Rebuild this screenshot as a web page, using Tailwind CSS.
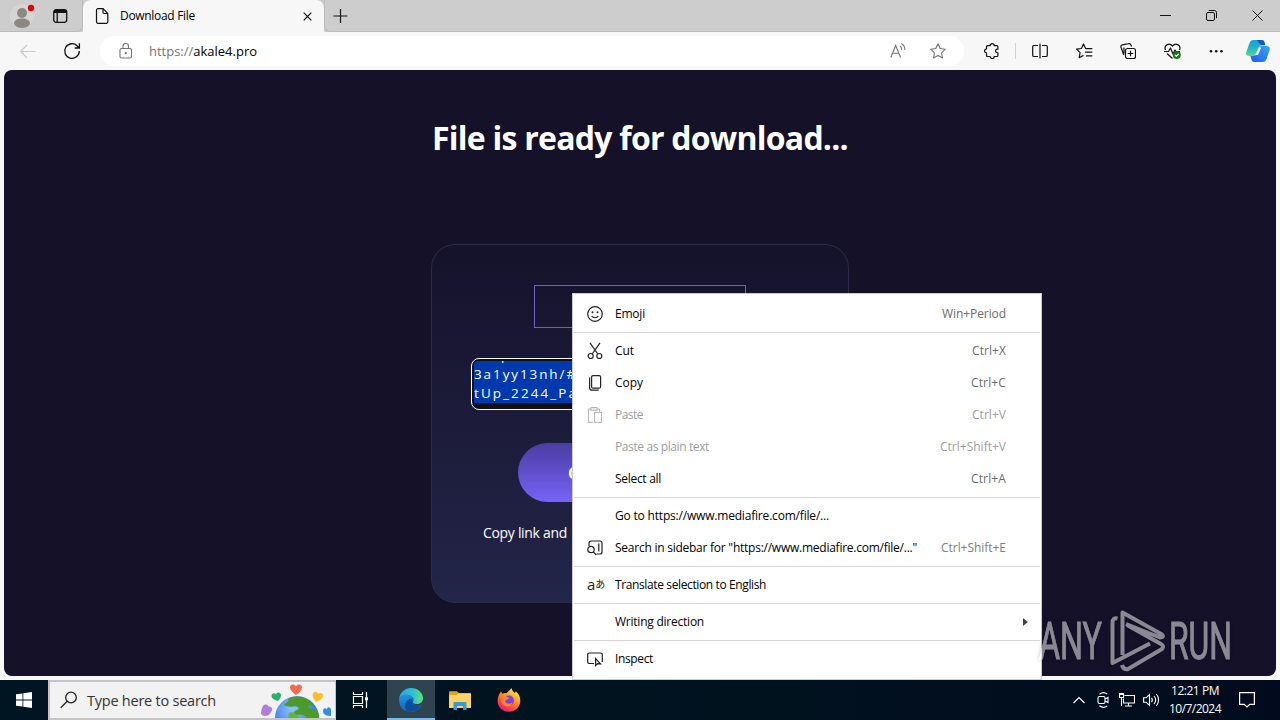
<!DOCTYPE html>
<html lang="en">
<head>
<meta charset="utf-8">
<title>Download File</title>
<script src="https://cdn.jsdelivr.net/npm/@tailwindcss/browser@4"></script>
</head>
<body class="w-[1280px] h-[720px] overflow-hidden relative flex flex-col bg-[#f7f7f8] text-black font-['Open_Sans','Noto_Sans',sans-serif] text-xs whitespace-nowrap">

<!-- Tab strip -->
<header class="h-8 shrink-0 flex bg-[#cdcdcd]">
  <div class="w-[83px] flex items-center border-b border-r border-[#bbb] rounded-br-md">
    <svg class="ml-2.5 w-7 h-7" viewBox="0 0 28 28"><circle cx="12" cy="14" r="12" fill="#d6d5d4"/><circle cx="12" cy="11" r="5" fill="#8b8886"/><path d="M4 22c0-4 3.500-5.500 8-5.500s8 1.500 8 5.500c-2 3-5 4-8 4s-6-1-8-4z" fill="#8b8886"/><circle cx="21" cy="6" r="3.200" fill="#e3000f"/></svg>
    <svg class="ml-3.5 w-4 h-4" viewBox="0 0 16 16" fill="none" stroke="#111" stroke-width="1.300"><rect x="1.700" y="1.700" width="13" height="12.600" rx="2.500"/><path d="M2 3.500h12.500" stroke-width="3"/><path d="M5.200 4v10"/></svg>
  </div>
  <div class="w-[241px] flex items-center bg-[#f7f7f7] rounded-t-lg">
    <svg class="ml-3 w-3.5 h-4" viewBox="0 0 14 16" fill="none" stroke="#111" stroke-width="1.200"><path d="M3 .700h5L12.800 5.500v8.300a1.500 1.500 0 0 1-1.500 1.500H3a1.500 1.500 0 0 1-1.500-1.500V2.200A1.500 1.500 0 0 1 3 .700z"/><path d="M8 .700v3.600a1.200 1.200 0 0 0 1.200 1.200h3.600"/></svg>
    <span class="ml-[11px]" data-w="75">Download File</span>
    <svg class="ml-auto mr-3 w-[9px] h-[9px]" viewBox="0 0 9 9" stroke="#111" stroke-width="1.200"><path d="M.700.700l7.600 7.600M8.300.700L.700 8.300"/></svg>
  </div>
  <div class="flex-1 flex items-center border-b border-l border-[#bbb] rounded-bl-md">
    <svg class="ml-[7px] w-4 h-4" viewBox="0 0 16 16" stroke="#111" stroke-width="1.200"><path d="M8.500 1v14M1.500 8h14"/></svg>
    <div class="ml-auto mr-[17px] flex items-center gap-[35px]">
      <svg class="w-[11px] h-[11px]" viewBox="0 0 11 11" stroke="#111"><path d="M0 5.500h11"/></svg>
      <svg class="w-[11px] h-[11px]" viewBox="0 0 11 11" fill="none" stroke="#111"><rect x=".500" y="2.500" width="8" height="8" rx="1.500"/><path d="M2.800.500H8.500a2 2 0 0 1 2 2v5.700"/></svg>
      <svg class="w-[11px] h-[11px]" viewBox="0 0 11 11" stroke="#111"><path d="M.500.500l10 10M10.500.500l-10 10"/></svg>
    </div>
  </div>
</header>

<!-- Toolbar -->
<nav class="h-[38px] shrink-0 flex items-center bg-[#f7f7f7]">
  <svg class="ml-5 w-4 h-4" viewBox="0 0 16 16" fill="none" stroke="#cbcbcb" stroke-width="1.200"><path d="M15.500 8.500H1M7 2L.700 8.500 7 15"/></svg>
  <svg class="ml-[27px] w-[18px] h-[18px]" viewBox="0 0 18 18" fill="none" stroke="#111" stroke-width="1.300"><path d="M16.300 9a7.300 7.300 0 1 1-2-5l2 2M16.400 1.300V6h-4.700"/></svg>
  <div class="ml-[19px] w-[864px] h-[30px] rounded-full bg-white flex items-center">
    <svg class="ml-[19px] w-3.5 h-4" viewBox="0 0 14 16" fill="none" stroke="#757575" stroke-width="1.100"><rect x="1" y="5.500" width="11.500" height="9.500" rx="1.500"/><path d="M4 5.500V3.300a2.750 2.750 0 0 1 5.500 0v2.200"/><circle cx="6.750" cy="10.200" r=".6" fill="#757575"/></svg>
    <span class="ml-4 pt-px text-[13px]" data-w="108"><span class="text-[#757575]">https://</span>akale4.pro</span>
    <svg class="ml-auto w-4 h-4" viewBox="0 0 16 16" fill="none" stroke="#757575" stroke-width="1.100"><path d="M.800 14.500L5.700 2.500l4.900 12M2.500 10.300h6.400M9.800 2.900c1.300.8 1.900 2.200 1.900 4M11.300.600c2.500 1.400 3.700 3.700 3.600 6.500"/></svg>
    <svg class="ml-6 mr-[18px] w-4 h-4" viewBox="0 0 16 16" fill="none" stroke="#757575" stroke-width="1.100" stroke-linejoin="round"><path d="M8 .800l2.200 4.700 5.100.7-3.700 3.600.9 5.200L8 12.500 3.500 15l.9-5.200L.700 6.200l5.100-.7z"/></svg>
  </div>
  <svg class="ml-5 w-4 h-4" viewBox="0 0 16 16" fill="none" stroke="#111" stroke-width="1.200" stroke-linejoin="round"><path d="M3.500 2.700h2.700c0-2.700 4-2.700 4 0h2.700a1 1 0 0 1 1 1v2.500c-2.800-.6-3.400 3.700 0 3.600v2.700a1 1 0 0 1-1 1h-2.700c0 2.700-4 2.700-4 0H3.500a1 1 0 0 1-1-1V9.800c-2.600 0-2.600-3.800 0-3.800V3.700a1 1 0 0 1 1-1z"/></svg>
  <div class="ml-[15px] w-px h-4 bg-[#d0d0d0]"></div>
  <svg class="ml-4 w-4 h-4" viewBox="0 0 16 16" fill="none" stroke="#111" stroke-width="1.200"><path d="M6 2.500H2A1.300 1.300 0 0 0 .700 3.800v8.400A1.300 1.300 0 0 0 2 13.500h4M8 .500v15M10 2.500h4a1.300 1.300 0 0 1 1.300 1.300v8.400a1.300 1.300 0 0 1-1.300 1.300h-4"/></svg>
  <svg class="ml-7 w-[17px] h-4" viewBox="0 0 17 16" fill="none" stroke="#111" stroke-width="1.200" stroke-linejoin="round"><path d="M10.500 5.500H9.600L7.500.900 5.400 5.500l-4.800.7 3.500 3.500-.9 5 4.300-2.300M9.800 5.600h6.500M9 9.200h7.300M10 12.800h6.300"/></svg>
  <svg class="ml-[27px] w-4 h-4" viewBox="0 0 16 16" fill="none" stroke="#111" stroke-width="1.200"><rect x="5.500" y="5.500" width="10" height="10" rx="2"/><path d="M10.500 7.700v5.600M7.700 10.500h5.600M3.800 12L1 4.300a2 2 0 0 1 1.300-2.500L8.500.700a2 2 0 0 1 2.400 1.200l.6 1.600M4 4.500v6"/></svg>
  <svg class="ml-7 w-[17px] h-4" viewBox="0 0 17 16" fill="none" stroke="#111" stroke-width="1.200" stroke-linejoin="round"><path d="M1.500 7C-.500 2.500 5-.800 8.500 3 12-.800 17.500 2.500 15.500 7M0 8.500h4.500l2-3.500 2.500 6 2-4 1 1.500h4M3 10.500l5.500 5"/><circle cx="12.800" cy="12" r="4" fill="#107c10" stroke="none"/><path d="M11 12l1.300 1.300 2.400-2.500" stroke="#fff"/></svg>
  <svg class="ml-[27px] w-4 h-4" viewBox="0 0 16 16" fill="#111"><circle cx="3" cy="8.300" r="1.300"/><circle cx="8.200" cy="8.300" r="1.300"/><circle cx="13.400" cy="8.300" r="1.300"/></svg>
  <svg class="ml-[22px] w-6 h-6" viewBox="0 0 24 24">
    <defs>
      <linearGradient id="c1" x1="0" y1="0" x2="0" y2="1"><stop offset="0" stop-color="#149fe0"/><stop offset=".5" stop-color="#22b4c8"/><stop offset="1" stop-color="#5bd884"/></linearGradient>
      <linearGradient id="c2" x1="0" y1="1" x2="1" y2="0"><stop offset="0" stop-color="#1d5be6"/><stop offset="1" stop-color="#36a7fa"/></linearGradient>
    </defs>
    <path d="M7.500 1h8c2 0 2.700 1 3.200 3l.5 2h-2.500c-2 0-3 .8-3.600 2.700L11 14.500C10.400 16.500 9.500 17 7.500 17H3.500C.500 17-.300 15 .500 12.500L3.500 4C4.200 2 5.500 1 7.500 1z" fill="url(#c1)"/>
    <path d="M10.500 1h5c2 0 2.700 1 3.200 3l.5 2.200h-4z" fill="#1556ba"/>
    <path d="M16.500 23h-8c-2 0-2.700-1-3.200-3l-.8-3H7.500c2 0 3-.8 3.600-2.700L13 9.500C13.600 7.500 14.500 7 16.500 7h4c3 0 3.800 2 3 4.500L20.500 20c-.7 2-2 3-4 3z" fill="url(#c2)"/>
    <path d="M12.500 8.500h2.700L12 16H9.300z" fill="#f2fbff"/>
  </svg>
</nav>

<!-- Page -->
<div class="h-[610px] shrink-0 px-1 pb-1">
  <main class="h-[606px] rounded-lg bg-[#141129] overflow-hidden flex flex-col items-center text-white">
    <h1 class="mt-[46px] h-11 leading-[44px] text-[32px] font-bold" data-w="416">File is ready for download...</h1>
    <section class="mt-[84px] w-[418px] h-[359px] rounded-[24px] border border-[#2e2b49] bg-linear-to-b from-[#15122b] to-[#232549] flex flex-col items-center">
      <div class="mt-10 w-[212px] h-[43px] border border-[#6c62c4]"></div>
      <div class="mt-[30px] w-[338px] h-[52px] rounded-lg border border-white bg-[#101018] p-[2px] overflow-hidden">
        <div class="h-[42px] rounded-tl bg-[#0038ad] overflow-hidden flex flex-col justify-end text-[13.5px] leading-[19px]">
          <div data-w="70" class="self-start">https://</div>
          <div data-w="103" class="self-start">3a1yy13nh/#</div>
          <div data-w="104" class="self-start">tUp_2244_Pa</div>
        </div>
      </div>
      <div class="mt-[33px] w-[244px] h-[59px] rounded-full bg-linear-to-b from-[#4b3da3] to-[#7763f8] flex items-center pl-[50px] text-base font-bold">C</div>
      <p class="mt-5 w-[314px] text-[14px] leading-[22px]"><span data-w="84">Copy link and</span></p>
    </section>
  </main>
</div>

<!-- Taskbar -->
<footer class="h-10 shrink-0 flex items-stretch text-white bg-linear-to-r from-[#001522] via-[#00131f] to-[#020b1d]">
  <div class="w-12 flex items-center justify-center">
    <svg class="w-4 h-4" viewBox="0 0 16 16" fill="#fff"><path d="M0 2.300L6.500 1.400V7.500H0zM7.300 1.300L16 0v7.500H7.300zM0 8.400h6.500v6.200L0 13.700zM7.300 8.400H16V16l-8.700-1.300z"/></svg>
  </div>
  <div class="w-72 border-y-2 border-l-2 border-r border-[#c4c4c4] bg-[#f2f2f2] flex items-center text-[#333] text-[14.5px]">
    <svg class="ml-2.5 w-[18px] h-[18px]" viewBox="0 0 18 18" fill="none" stroke="#222" stroke-width="1.300"><circle cx="11" cy="6.500" r="5.300"/><path d="M7.200 10.300L.800 16.700"/></svg>
    <span class="ml-[9px] pt-0.5" data-w="129">Type here to search</span>
    <svg class="ml-auto mr-1 w-[70px] h-9" viewBox="0 0 70 36">
      <defs><radialGradient id="sea" cx=".4" cy=".3"><stop offset="0" stop-color="#8fc4ff"/><stop offset="1" stop-color="#3f7de8"/></radialGradient></defs>
      <circle cx="36" cy="36" r="22" fill="url(#sea)"/>
      <path d="M27 17c8-5 20-2 26 6-2 2-4-1-6 2 3 2 6 2 9 3 2 3 2 6 2 8H46c-3-4-6-4-10-3-5-1-3-4 0-5 3 0 2-3-1-4-4 1-8 1-12-1 1-2 6-3 4-6z" fill="#4b9b26"/>
      <path d="M28 31c4-2 8 1 10 5H27z" fill="#62b536"/>
      <path d="M35 13c-4-3-6-5-6-7.500C29 2 33.500 1.500 35 4.500 36.500 1.500 41 2 41 5.500 41 8 39 10 35 13z" fill="#f26a4f"/>
      <path d="M17 19c-4-1-6.500-3-6.500-5 0-3 3.500-3.500 4.500-1.500.5-3 5-2.500 5 .5 0 2-1 4-3 6z" fill="#25b36b"/>
      <path d="M55 20c-3-4-4-6-3-8.500 1-2.500 4.500-2 5 .5 2-2 5.500-.5 5 2-.5 2.500-3 4.500-7 6z" fill="#fbbd27"/>
      <path d="M8 33c-4 2-8 1-8-2s1-5 2-7c2-2.500 5-1.500 5.500.500 2.500-.5 4.500 2 3.500 4z" fill="#b07fdc"/>
      <path d="M62 29c0-3 3-3.500 4-1.500 0-3 3.500-3 4 0v6.500c-4 0-8-1-8-5z" fill="#2f8fe0"/>
    </svg>
  </div>
  <div class="w-[51px] flex items-center justify-center pr-0.5">
    <svg class="w-[17px] h-4" viewBox="0 0 17 16" fill="none" stroke="#fff" stroke-width="1.200"><path d="M1.500 0v2.500h9V0M1.500 16v-2.500h9V16M1.500 4.500h9v7h-9zM14.500 0v16"/><path d="M13 5.300h3v3h-3z" fill="#fff" stroke="none"/></svg>
  </div>
  <div class="w-12 bg-[#30444f] border-b-2 border-[#76b9ed] flex items-center justify-center">
    <svg class="mt-0.5 w-6 h-6" viewBox="0 0 24 24">
      <defs>
        <linearGradient id="e1" x1="0" x2="1"><stop offset="0" stop-color="#2aa5e8"/><stop offset=".6" stop-color="#2fc3cf"/><stop offset="1" stop-color="#66e06c"/></linearGradient>
        <linearGradient id="e2" x1="0" y1="0" x2="0" y2="1"><stop offset="0" stop-color="#1e93e0"/><stop offset="1" stop-color="#1167c2"/></linearGradient>
      </defs>
      <path d="M0 11C1 4 6 0 12 0c7 0 12 5 12 10 0 4-3 6-6 6-3 0-5-1-4-2.500C16 10 12 7 8 7c-4 0-7 2-8 4z" fill="url(#e1)"/>
      <path d="M0 12c0-3 3-5.500 7-5.500 4 0 7.500 2.500 7 6-.2 1-1 1.200-1 2 0 1.500 2 3 5 3 2 0 3.500-.6 4.500-.8C20.500 21 16.500 24 12 24 5 24 0 19 0 12z" fill="url(#e2)"/>
      <path d="M9 23.500C4 20 6 12 11.500 10.500c1.500.2 2.500 1.500 2 3-1.500 2.500 1.500 4 4 4 2 0 3.500-.6 4.500-.8C19.500 22 14.500 24.500 9 23.500z" fill="#0c4c9c"/>
    </svg>
  </div>
  <div class="w-[49px] flex items-center justify-center">
    <svg class="w-[22px] h-[19px]" viewBox="0 0 22 19"><path d="M0 1.500A1.300 1.300 0 0 1 1.300.200H8l1.700 1.800H22V6H0z" fill="#e9a01c"/><path d="M0 4h8l1.500-1.500H22V17H0z" fill="#fcd462"/><path d="M4.500 19v-7a1 1 0 0 1 1-1h11a1 1 0 0 1 1 1v7h-3.500v-4H8v4z" fill="#3a96dd"/></svg>
  </div>
  <div class="w-[49px] flex items-center justify-center">
    <svg class="w-6 h-6" viewBox="0 0 24 24">
      <defs><linearGradient id="f1" x1=".8" y1="0" x2=".2" y2="1"><stop offset="0" stop-color="#fff14a"/><stop offset=".4" stop-color="#ff9a1f"/><stop offset=".75" stop-color="#ff3d4f"/><stop offset="1" stop-color="#e31587"/></linearGradient></defs>
      <path d="M4 3.500c.5 1 1 1.700 1.500 2.200C7 5 8 5 9.500 5.300 11 3.500 13 2 14.500 0c.5 2.500 2 4 3.500 5l.7-1.700C22 6 23.500 9.500 23.300 13c-.3 6-5 10.800-11.300 10.800S.600 19 .600 13C.600 9 2 6 4 3.500z" fill="url(#f1)"/>
      <circle cx="12" cy="12.500" r="5" fill="#7a3ff0"/>
      <path d="M5.500 9c3-2 5 0 7 1-2 2-4 1.500-4.500 3 .5 3 5 3.500 7.500 1.500-1 4-6 5-9 2.500-2.500-2-3-5-1-8z" fill="#ff8a20"/>
    </svg>
  </div>
  <div class="ml-auto flex items-center">
    <svg class="w-3 h-2" viewBox="0 0 12 8" fill="none" stroke="#fff" stroke-width="1.200"><path d="M.500 7L6 1.500 11.500 7"/></svg>
    <svg class="ml-3 w-[13px] h-4" viewBox="0 0 13 16" fill="none" stroke="#fff" stroke-width="1.100"><rect x="1" y="4.500" width="7" height="7" rx="1.500"/><path d="M8 7l3-1.500v5L8 9M2.500 2.200C5 .200 8 .200 10.300 2.200M2.500 13.800c2.500 2 5.500 2 7.800 0"/></svg>
    <svg class="ml-[9px] w-4 h-3.5" viewBox="0 0 16 14" fill="none" stroke="#fff" stroke-width="1.100"><path d="M5.500 2.500h10v7.500h-11V5.500M9.500 10v3M6 13h7M.500.500h4v4h-4zM2.500 4.500V13M.500 1.500h4"/></svg>
    <svg class="ml-2 w-[17px] h-3.5" viewBox="0 0 17 14" fill="none" stroke="#fff" stroke-width="1.100"><path d="M.600 4.800h2.500l3.400-3.300v11L3.100 9.200H.600zM8.500 4.800c1 1.300 1 3.100 0 4.400M11 3c2 2.400 2 5.600 0 8M13.300 1c3 3.500 3 8.500 0 12"/></svg>
    <div class="ml-2 w-[54px] flex flex-col items-center text-[12px] leading-[18px]"><span data-w="48">12:21 PM</span><span data-w="52">10/7/2024</span></div>
    <svg class="ml-[17px] mr-[25px] w-4 h-4" viewBox="0 0 16 16" fill="none" stroke="#fff" stroke-width="1.200"><path d="M.600.600h14.800v11.800h-4.600L8 15l-2.800-2.600H.600z"/></svg>
  </div>
</footer>

<!-- Context menu -->
<div class="absolute left-[572px] top-[293px] w-[470px] h-[387px] bg-white border border-[#ccc] pt-1 flex flex-col">
  <div class="h-8 flex items-center pl-3.5 pr-[35px]">
    <svg class="w-4 h-4 mr-3" viewBox="0 0 16 16" fill="none" stroke="#222" stroke-width="1.200"><circle cx="8" cy="8" r="7.300"/><path d="M4.700 10c1.500 2.300 5.100 2.300 6.600 0"/><g fill="#222" stroke="none"><circle cx="5.500" cy="6.300" r="1"/><circle cx="10.500" cy="6.300" r="1"/></g></svg>
    <span data-w="30">Emoji</span><span class="ml-auto text-[#6b6b6b]" data-w="64">Win+Period</span>
  </div>
  <hr class="my-0.5 mx-px border-[#d4d4d6]">
  <div class="h-8 flex items-center pl-3.5 pr-[35px]">
    <svg class="w-4 h-[18px] mr-3" viewBox="0 0 16 18" fill="none" stroke="#222" stroke-width="1.200"><circle cx="3.700" cy="14" r="2.500"/><circle cx="12.300" cy="14" r="2.500"/><path d="M3 .800l7.800 11.200M13 .800L5.200 12"/></svg>
    <span data-w="19">Cut</span><span class="ml-auto text-[#6b6b6b]" data-w="34">Ctrl+X</span>
  </div>
  <div class="h-8 flex items-center pl-3.5 pr-[35px]">
    <svg class="w-4 h-4 mr-3" viewBox="0 0 16 16" fill="none" stroke="#222" stroke-width="1.200"><rect x="4.600" y=".600" width="9" height="12.600" rx="1.500"/><path d="M2.600 2.500v10.200a2.500 2.500 0 0 0 2.500 2.500h6.500"/></svg>
    <span data-w="28">Copy</span><span class="ml-auto text-[#6b6b6b]" data-w="35">Ctrl+C</span>
  </div>
  <div class="h-8 flex items-center pl-3.5 pr-[35px] text-[#9d9d9d]">
    <svg class="w-4 h-4 mr-3" viewBox="0 0 16 16" fill="none" stroke="#b8b8b8" stroke-width="1.100"><path d="M6 15.400H1.500V2H4M10 2h2.500v2.500M4 .600h6v2.500H4z"/><rect x="7.500" y="5.500" width="7" height="9.900"/></svg>
    <span data-w="28">Paste</span><span class="ml-auto" data-w="34">Ctrl+V</span>
  </div>
  <div class="h-8 flex items-center pl-[42px] pr-[35px] text-[#9d9d9d]"><span data-w="94">Paste as plain text</span><span class="ml-auto" data-w="66">Ctrl+Shift+V</span></div>
  <div class="h-8 flex items-center pl-[42px] pr-[35px]"><span data-w="46">Select all</span><span class="ml-auto text-[#6b6b6b]" data-w="35">Ctrl+A</span></div>
  <hr class="my-0.5 mx-px border-[#d4d4d6]">
  <div class="h-8 flex items-center pl-[42px]"><span data-w="214">Go to https://www.mediafire.com/file/...</span></div>
  <div class="h-8 flex items-center pl-3.5 pr-[35px]">
    <svg class="w-4 h-4 mr-3" viewBox="0 0 16 16" fill="none" stroke="#222" stroke-width="1.200"><path d="M2 6V3A2 2 0 0 1 4 1h9a2 2 0 0 1 2 2v9a2 2 0 0 1-2 2H9.500M11.800 3.500v8"/><circle cx="4" cy="9.500" r="3.200"/><path d="M6.300 11.800l3 3.200"/></svg>
    <span data-w="302">Search in sidebar for "https://www.mediafire.com/file/..."</span><span class="ml-auto text-[#808080]" data-w="65">Ctrl+Shift+E</span>
  </div>
  <hr class="my-0.5 mx-px border-[#d4d4d6]">
  <div class="h-8 flex items-center pl-3.5">
    <span class="w-4 mr-3 flex items-center leading-4 -mt-0.5 text-[#222]"><span class="text-[15px]">a</span><span class="text-[10px] font-['Noto_Sans_CJK_JP',sans-serif]">あ</span></span>
    <span data-w="151">Translate selection to English</span>
  </div>
  <hr class="my-0.5 mx-px border-[#d4d4d6]">
  <div class="h-8 flex items-center pl-[42px] pr-[13px]"><span data-w="89">Writing direction</span>
    <svg class="ml-auto w-[5px] h-2" viewBox="0 0 5 8"><path d="M0 0l5 4-5 4z" fill="#444"/></svg>
  </div>
  <hr class="my-0.5 mx-px border-[#d4d4d6]">
  <div class="h-8 flex items-center pl-3.5">
    <svg class="w-4 h-4 mr-3" viewBox="0 0 16 16" fill="none" stroke="#222" stroke-width="1.200"><path d="M7 12.500H2.300A1.600 1.600 0 0 1 .700 10.900V3.600A1.600 1.600 0 0 1 2.300 2h11.400a1.600 1.600 0 0 1 1.600 1.600v7.300"/><path d="M8.600 7.500v7l2-1.800 2.900.1z"/></svg>
    <span data-w="38">Inspect</span>
  </div>
</div>

<!-- Watermark -->
<svg class="absolute left-[1030px] top-[600px] w-[210px] h-20 opacity-50 drop-shadow-[0_0_2px_rgba(0,0,0,0.5)] font-['Roboto',sans-serif]" viewBox="0 0 210 80" fill="#fff">
  <g stroke="#fff" stroke-width="1"><text x="9" y="59" font-size="51" textLength="63" lengthAdjust="spacingAndGlyphs">ANY</text>
  <text x="139" y="59" font-size="51" textLength="63" lengthAdjust="spacingAndGlyphs">RUN</text></g>
  <g fill="none" stroke="#fff" stroke-width="4" stroke-linejoin="round"><path d="M87.500 18.500q-5-1-5 4V63L120 43.500M92.500 55V12.500L132 34.500q2.500 3-2 3L96 24M92 65q1 5 6 4L132 49q2.500-3-1-5L97 25"/></g>
</svg>

<script>
function fitLabels() {
  document.querySelectorAll('[data-w]').forEach(function (el) {
    el.style.letterSpacing = '0px';
    var r = document.createRange();
    r.selectNodeContents(el);
    var n = el.textContent.length;
    el.style.letterSpacing = ((el.dataset.w - r.getBoundingClientRect().width) / n) + 'px';
  });
}
fitLabels();
window.addEventListener('load', function () {
  fitLabels();
  requestAnimationFrame(fitLabels);
  setTimeout(fitLabels, 60);
});
document.fonts.ready.then(fitLabels);
</script>
</body>
</html>
